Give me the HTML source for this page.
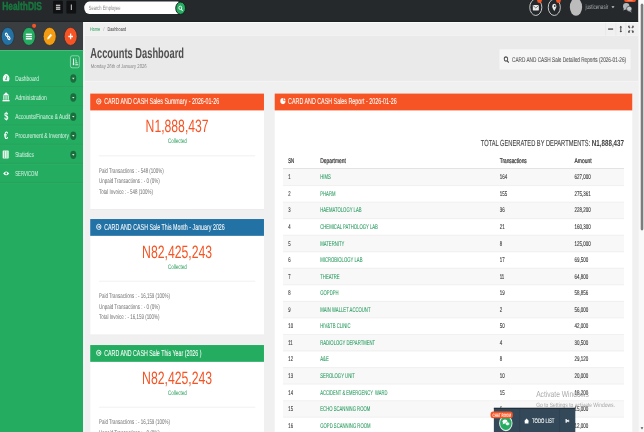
<!DOCTYPE html>
<html lang="en">
<head>
<meta charset="utf-8">
<title>HealthDIS - Accounts Dashboard</title>
<style>
html,body{margin:0;padding:0;width:644px;height:432px;overflow:hidden;background:#f2f2f2;font-family:"Liberation Sans",sans-serif;}
svg{will-change:transform;display:block;position:absolute;left:0;top:0;font-family:"Liberation Sans",sans-serif;}
svg text{font-family:"Liberation Sans",sans-serif;text-rendering:geometricPrecision;}
</style>
</head>
<body>
<svg width="644" height="432" viewBox="0 0 1920 1080" preserveAspectRatio="none">
<rect x="0.0" y="0.0" width="1920.0" height="1080.0" fill="#f0f0f0"/>
<rect x="248.0" y="55.0" width="1655.0" height="34.5" fill="#f0f0f0"/>
<rect x="248.0" y="54.5" width="1655.0" height="2.8" fill="#fbfbfb"/>
<rect x="248.0" y="89.5" width="1655.0" height="113.5" fill="#eaeaea"/>
<rect x="248.0" y="88.3" width="1655.0" height="1.6" fill="#f4f4f4"/>
<rect x="248.0" y="203.0" width="1655.0" height="878.0" fill="#f0f0f0"/>
<rect x="248.0" y="202.2" width="1655.0" height="1.8" fill="#f7f7f7"/>
<rect x="269.0" y="235.0" width="518.0" height="289.0" fill="#e3e3e3"/>
<rect x="269.0" y="234.0" width="518.0" height="289.0" fill="#ffffff"/>
<rect x="269.0" y="234.0" width="518.0" height="42.0" fill="#f65424"/>
<circle cx="294.5" cy="253.6" r="6.500" fill="none" stroke="#fff" stroke-width="2.400"/>
<path d="M291.3 253.6h5.200M294.7 250.79999999999998l2.800 2.800l-2.800 2.800" stroke="#fff" stroke-width="2.200" fill="none"/>
<text x="310.7" y="261.2" font-size="21.5" fill="#ffffff" textLength="343.0" lengthAdjust="spacingAndGlyphs" stroke="#ffffff" stroke-width="0.15">CARD AND CASH Sales Summary - 2026-01-26</text>
<text x="528.0" y="330.6" font-size="44.5" fill="#f65424" text-anchor="middle" textLength="188.0" lengthAdjust="spacingAndGlyphs">N1,888,437</text>
<text x="528.5" y="357.8" font-size="16.5" fill="#239d57" text-anchor="middle" textLength="56.0" lengthAdjust="spacingAndGlyphs">Collected</text>
<line x1="295.0" y1="389.5" x2="761.0" y2="389.5" stroke="#e6e6e6" stroke-width="1.5"/>
<text x="295.0" y="431.3" font-size="17" fill="#707070" textLength="193.0" lengthAdjust="spacingAndGlyphs">Paid Transactions : - 548 (100%)</text>
<text x="295.0" y="458.0" font-size="17" fill="#707070" textLength="181.0" lengthAdjust="spacingAndGlyphs">Unpaid Transactions : - 0 (0%)</text>
<text x="295.0" y="484.7" font-size="17" fill="#707070" textLength="161.0" lengthAdjust="spacingAndGlyphs">Total Invoice : - 548 (100%)</text>
<rect x="269.0" y="548.6" width="518.0" height="289.0" fill="#e3e3e3"/>
<rect x="269.0" y="547.6" width="518.0" height="289.0" fill="#ffffff"/>
<rect x="269.0" y="547.6" width="518.0" height="42.0" fill="#2372a5"/>
<circle cx="294.5" cy="567.2" r="6.500" fill="none" stroke="#fff" stroke-width="2.400"/>
<path d="M291.3 567.2h5.200M294.7 564.4000000000001l2.800 2.800l-2.800 2.800" stroke="#fff" stroke-width="2.200" fill="none"/>
<text x="310.7" y="574.8" font-size="21.5" fill="#ffffff" textLength="359.5" lengthAdjust="spacingAndGlyphs" stroke="#ffffff" stroke-width="0.15">CARD AND CASH Sale This Month - January 2026</text>
<text x="528.0" y="644.2" font-size="44.5" fill="#f65424" text-anchor="middle" textLength="209.0" lengthAdjust="spacingAndGlyphs">N82,425,243</text>
<text x="528.5" y="671.4" font-size="16.5" fill="#239d57" text-anchor="middle" textLength="56.0" lengthAdjust="spacingAndGlyphs">Collected</text>
<line x1="295.0" y1="703.1" x2="761.0" y2="703.1" stroke="#e6e6e6" stroke-width="1.5"/>
<text x="295.0" y="744.9" font-size="17" fill="#707070" textLength="211.6" lengthAdjust="spacingAndGlyphs">Paid Transactions : - 16,159 (100%)</text>
<text x="295.0" y="771.6" font-size="17" fill="#707070" textLength="181.0" lengthAdjust="spacingAndGlyphs">Unpaid Transactions : - 0 (0%)</text>
<text x="295.0" y="798.3" font-size="17" fill="#707070" textLength="180.7" lengthAdjust="spacingAndGlyphs">Total Invoice : - 16,159 (100%)</text>
<rect x="269.0" y="863.6" width="518.0" height="289.0" fill="#e3e3e3"/>
<rect x="269.0" y="862.6" width="518.0" height="289.0" fill="#ffffff"/>
<rect x="269.0" y="862.6" width="518.0" height="42.0" fill="#24ad61"/>
<circle cx="294.5" cy="882.2" r="6.500" fill="none" stroke="#fff" stroke-width="2.400"/>
<path d="M291.3 882.2h5.200M294.7 879.4000000000001l2.800 2.800l-2.800 2.800" stroke="#fff" stroke-width="2.200" fill="none"/>
<text x="310.7" y="889.8" font-size="21.5" fill="#ffffff" textLength="290.0" lengthAdjust="spacingAndGlyphs" stroke="#ffffff" stroke-width="0.15">CARD AND CASH Sale This Year (2026 )</text>
<text x="528.0" y="959.2" font-size="44.5" fill="#f65424" text-anchor="middle" textLength="209.0" lengthAdjust="spacingAndGlyphs">N82,425,243</text>
<text x="528.5" y="986.4" font-size="16.5" fill="#239d57" text-anchor="middle" textLength="56.0" lengthAdjust="spacingAndGlyphs">Collected</text>
<line x1="295.0" y1="1018.1" x2="761.0" y2="1018.1" stroke="#e6e6e6" stroke-width="1.5"/>
<text x="295.0" y="1059.9" font-size="17" fill="#707070" textLength="211.6" lengthAdjust="spacingAndGlyphs">Paid Transactions : - 16,159 (100%)</text>
<text x="295.0" y="1086.6" font-size="17" fill="#707070" textLength="181.0" lengthAdjust="spacingAndGlyphs">Unpaid Transactions : - 0 (0%)</text>
<text x="295.0" y="1113.3" font-size="17" fill="#707070" textLength="180.7" lengthAdjust="spacingAndGlyphs">Total Invoice : - 16,159 (100%)</text>
<rect x="819.0" y="235.0" width="1066.0" height="900.0" fill="#ffffff"/>
<rect x="819.0" y="234.0" width="1066.0" height="42.0" fill="#f65424"/>
<ellipse cx="843.500" cy="252.800" rx="7.800" ry="7.600" fill="#fff"/><path d="M845 244.500v7h7.500" stroke="#f65424" stroke-width="1.800" fill="none"/>
<text x="859.0" y="261.2" font-size="21.5" fill="#ffffff" textLength="323.5" lengthAdjust="spacingAndGlyphs" stroke="#ffffff" stroke-width="0.15">CARD AND CASH Sales Report - 2026-01-26</text>
<text x="1433.5" y="365.8" font-size="22" fill="#444444" textLength="331.0" lengthAdjust="spacingAndGlyphs" xml:space="preserve" stroke="#444444" stroke-width="0.25">TOTAL GENERATED BY DEPARTMENTS: </text>
<text x="1860.4" y="365.8" font-size="22" fill="#3a3a3a" font-weight="700" text-anchor="end" textLength="96.0" lengthAdjust="spacingAndGlyphs">N1,888,437</text>
<text x="859.5" y="406.5" font-size="17" fill="#2e2e2e" textLength="17.6" lengthAdjust="spacingAndGlyphs" stroke="#2e2e2e" stroke-width="0.5">SN</text>
<text x="954.8" y="406.5" font-size="17" fill="#2e2e2e" textLength="76.4" lengthAdjust="spacingAndGlyphs" stroke="#2e2e2e" stroke-width="0.5">Department</text>
<text x="1489.8" y="406.5" font-size="17" fill="#2e2e2e" textLength="80.6" lengthAdjust="spacingAndGlyphs" stroke="#2e2e2e" stroke-width="0.5">Transactions</text>
<text x="1713.0" y="406.5" font-size="17" fill="#2e2e2e" textLength="50.7" lengthAdjust="spacingAndGlyphs" stroke="#2e2e2e" stroke-width="0.5">Amount</text>
<rect x="843.7" y="420.5" width="1016.7" height="2.0" fill="#dddddd"/>
<rect x="843.7" y="422.5" width="1016.7" height="41.4" fill="#f8f8f8"/>
<text x="859.5" y="448.5" font-size="17" fill="#3a3a3a" textLength="7.0" lengthAdjust="spacingAndGlyphs" stroke="#3a3a3a" stroke-width="0.3">1</text>
<text x="954.8" y="448.5" font-size="17" fill="#22995a" textLength="31.5" lengthAdjust="spacingAndGlyphs" xml:space="preserve" stroke="#22995a" stroke-width="0.15">HIMS</text>
<text x="1489.8" y="448.5" font-size="17" fill="#3a3a3a" textLength="22.1" lengthAdjust="spacingAndGlyphs" stroke="#3a3a3a" stroke-width="0.3">164</text>
<text x="1713.0" y="448.5" font-size="17" fill="#3a3a3a" textLength="48.3" lengthAdjust="spacingAndGlyphs" stroke="#3a3a3a" stroke-width="0.3">627,000</text>
<line x1="843.7" y1="463.9" x2="1860.4" y2="463.9" stroke="#e2e2e2" stroke-width="1.2"/>
<text x="859.5" y="489.9" font-size="17" fill="#3a3a3a" textLength="7.0" lengthAdjust="spacingAndGlyphs" stroke="#3a3a3a" stroke-width="0.3">2</text>
<text x="954.8" y="489.9" font-size="17" fill="#22995a" textLength="45.5" lengthAdjust="spacingAndGlyphs" xml:space="preserve" stroke="#22995a" stroke-width="0.15">PHARM</text>
<text x="1489.8" y="489.9" font-size="17" fill="#3a3a3a" textLength="22.1" lengthAdjust="spacingAndGlyphs" stroke="#3a3a3a" stroke-width="0.3">155</text>
<text x="1713.0" y="489.9" font-size="17" fill="#3a3a3a" textLength="48.3" lengthAdjust="spacingAndGlyphs" stroke="#3a3a3a" stroke-width="0.3">275,361</text>
<rect x="843.7" y="505.2" width="1016.7" height="41.4" fill="#f8f8f8"/>
<line x1="843.7" y1="505.2" x2="1860.4" y2="505.2" stroke="#e2e2e2" stroke-width="1.2"/>
<text x="859.5" y="531.2" font-size="17" fill="#3a3a3a" textLength="7.0" lengthAdjust="spacingAndGlyphs" stroke="#3a3a3a" stroke-width="0.3">3</text>
<text x="954.8" y="531.2" font-size="17" fill="#22995a" textLength="123.2" lengthAdjust="spacingAndGlyphs" xml:space="preserve" stroke="#22995a" stroke-width="0.15">HAEMATOLOGY LAB</text>
<text x="1489.8" y="531.2" font-size="17" fill="#3a3a3a" textLength="14.7" lengthAdjust="spacingAndGlyphs" stroke="#3a3a3a" stroke-width="0.3">36</text>
<text x="1713.0" y="531.2" font-size="17" fill="#3a3a3a" textLength="48.3" lengthAdjust="spacingAndGlyphs" stroke="#3a3a3a" stroke-width="0.3">228,200</text>
<line x1="843.7" y1="546.6" x2="1860.4" y2="546.6" stroke="#e2e2e2" stroke-width="1.2"/>
<text x="859.5" y="572.6" font-size="17" fill="#3a3a3a" textLength="7.0" lengthAdjust="spacingAndGlyphs" stroke="#3a3a3a" stroke-width="0.3">4</text>
<text x="954.8" y="572.6" font-size="17" fill="#22995a" textLength="171.8" lengthAdjust="spacingAndGlyphs" xml:space="preserve" stroke="#22995a" stroke-width="0.15">CHEMICAL PATHOLOGY LAB</text>
<text x="1489.8" y="572.6" font-size="17" fill="#3a3a3a" textLength="14.7" lengthAdjust="spacingAndGlyphs" stroke="#3a3a3a" stroke-width="0.3">21</text>
<text x="1713.0" y="572.6" font-size="17" fill="#3a3a3a" textLength="48.3" lengthAdjust="spacingAndGlyphs" stroke="#3a3a3a" stroke-width="0.3">160,300</text>
<rect x="843.7" y="588.0" width="1016.7" height="41.4" fill="#f8f8f8"/>
<line x1="843.7" y1="588.0" x2="1860.4" y2="588.0" stroke="#e2e2e2" stroke-width="1.2"/>
<text x="859.5" y="614.0" font-size="17" fill="#3a3a3a" textLength="7.0" lengthAdjust="spacingAndGlyphs" stroke="#3a3a3a" stroke-width="0.3">5</text>
<text x="954.8" y="614.0" font-size="17" fill="#22995a" textLength="71.9" lengthAdjust="spacingAndGlyphs" xml:space="preserve" stroke="#22995a" stroke-width="0.15">MATERNITY</text>
<text x="1489.8" y="614.0" font-size="17" fill="#3a3a3a" textLength="7.4" lengthAdjust="spacingAndGlyphs" stroke="#3a3a3a" stroke-width="0.3">8</text>
<text x="1713.0" y="614.0" font-size="17" fill="#3a3a3a" textLength="48.3" lengthAdjust="spacingAndGlyphs" stroke="#3a3a3a" stroke-width="0.3">125,000</text>
<line x1="843.7" y1="629.4" x2="1860.4" y2="629.4" stroke="#e2e2e2" stroke-width="1.2"/>
<text x="859.5" y="655.3" font-size="17" fill="#3a3a3a" textLength="7.0" lengthAdjust="spacingAndGlyphs" stroke="#3a3a3a" stroke-width="0.3">6</text>
<text x="954.8" y="655.3" font-size="17" fill="#22995a" textLength="125.8" lengthAdjust="spacingAndGlyphs" xml:space="preserve" stroke="#22995a" stroke-width="0.15">MICROBIOLOGY LAB</text>
<text x="1489.8" y="655.3" font-size="17" fill="#3a3a3a" textLength="14.7" lengthAdjust="spacingAndGlyphs" stroke="#3a3a3a" stroke-width="0.3">17</text>
<text x="1713.0" y="655.3" font-size="17" fill="#3a3a3a" textLength="40.9" lengthAdjust="spacingAndGlyphs" stroke="#3a3a3a" stroke-width="0.3">69,500</text>
<rect x="843.7" y="670.7" width="1016.7" height="41.4" fill="#f8f8f8"/>
<line x1="843.7" y1="670.7" x2="1860.4" y2="670.7" stroke="#e2e2e2" stroke-width="1.2"/>
<text x="859.5" y="696.7" font-size="17" fill="#3a3a3a" textLength="7.0" lengthAdjust="spacingAndGlyphs" stroke="#3a3a3a" stroke-width="0.3">7</text>
<text x="954.8" y="696.7" font-size="17" fill="#22995a" textLength="57.9" lengthAdjust="spacingAndGlyphs" xml:space="preserve" stroke="#22995a" stroke-width="0.15">THEATRE</text>
<text x="1489.8" y="696.7" font-size="17" fill="#3a3a3a" textLength="13.7" lengthAdjust="spacingAndGlyphs" stroke="#3a3a3a" stroke-width="0.3">11</text>
<text x="1713.0" y="696.7" font-size="17" fill="#3a3a3a" textLength="40.9" lengthAdjust="spacingAndGlyphs" stroke="#3a3a3a" stroke-width="0.3">64,800</text>
<line x1="843.7" y1="712.1" x2="1860.4" y2="712.1" stroke="#e2e2e2" stroke-width="1.2"/>
<text x="859.5" y="738.1" font-size="17" fill="#3a3a3a" textLength="7.0" lengthAdjust="spacingAndGlyphs" stroke="#3a3a3a" stroke-width="0.3">8</text>
<text x="954.8" y="738.1" font-size="17" fill="#22995a" textLength="54.6" lengthAdjust="spacingAndGlyphs" xml:space="preserve" stroke="#22995a" stroke-width="0.15">GOPDPH</text>
<text x="1489.8" y="738.1" font-size="17" fill="#3a3a3a" textLength="14.7" lengthAdjust="spacingAndGlyphs" stroke="#3a3a3a" stroke-width="0.3">19</text>
<text x="1713.0" y="738.1" font-size="17" fill="#3a3a3a" textLength="40.9" lengthAdjust="spacingAndGlyphs" stroke="#3a3a3a" stroke-width="0.3">58,856</text>
<rect x="843.7" y="753.5" width="1016.7" height="41.4" fill="#f8f8f8"/>
<line x1="843.7" y1="753.5" x2="1860.4" y2="753.5" stroke="#e2e2e2" stroke-width="1.2"/>
<text x="859.5" y="779.4" font-size="17" fill="#3a3a3a" textLength="7.0" lengthAdjust="spacingAndGlyphs" stroke="#3a3a3a" stroke-width="0.3">9</text>
<text x="954.8" y="779.4" font-size="17" fill="#22995a" textLength="149.8" lengthAdjust="spacingAndGlyphs" xml:space="preserve" stroke="#22995a" stroke-width="0.15">MAIN WALLET ACCOUNT</text>
<text x="1489.8" y="779.4" font-size="17" fill="#3a3a3a" textLength="7.4" lengthAdjust="spacingAndGlyphs" stroke="#3a3a3a" stroke-width="0.3">2</text>
<text x="1713.0" y="779.4" font-size="17" fill="#3a3a3a" textLength="40.9" lengthAdjust="spacingAndGlyphs" stroke="#3a3a3a" stroke-width="0.3">56,000</text>
<line x1="843.7" y1="794.8" x2="1860.4" y2="794.8" stroke="#e2e2e2" stroke-width="1.2"/>
<text x="859.5" y="820.8" font-size="17" fill="#3a3a3a" textLength="14.0" lengthAdjust="spacingAndGlyphs" stroke="#3a3a3a" stroke-width="0.3">10</text>
<text x="954.8" y="820.8" font-size="17" fill="#22995a" textLength="90.3" lengthAdjust="spacingAndGlyphs" xml:space="preserve" stroke="#22995a" stroke-width="0.15">HIV&amp;TB CLINIC</text>
<text x="1489.8" y="820.8" font-size="17" fill="#3a3a3a" textLength="14.7" lengthAdjust="spacingAndGlyphs" stroke="#3a3a3a" stroke-width="0.3">50</text>
<text x="1713.0" y="820.8" font-size="17" fill="#3a3a3a" textLength="40.9" lengthAdjust="spacingAndGlyphs" stroke="#3a3a3a" stroke-width="0.3">42,000</text>
<rect x="843.7" y="836.2" width="1016.7" height="41.4" fill="#f8f8f8"/>
<line x1="843.7" y1="836.2" x2="1860.4" y2="836.2" stroke="#e2e2e2" stroke-width="1.2"/>
<text x="859.5" y="862.2" font-size="17" fill="#3a3a3a" textLength="13.1" lengthAdjust="spacingAndGlyphs" stroke="#3a3a3a" stroke-width="0.3">11</text>
<text x="954.8" y="862.2" font-size="17" fill="#22995a" textLength="163.8" lengthAdjust="spacingAndGlyphs" xml:space="preserve" stroke="#22995a" stroke-width="0.15">RADIOLOGY DEPARTMENT</text>
<text x="1489.8" y="862.2" font-size="17" fill="#3a3a3a" textLength="7.4" lengthAdjust="spacingAndGlyphs" stroke="#3a3a3a" stroke-width="0.3">4</text>
<text x="1713.0" y="862.2" font-size="17" fill="#3a3a3a" textLength="40.9" lengthAdjust="spacingAndGlyphs" stroke="#3a3a3a" stroke-width="0.3">30,500</text>
<line x1="843.7" y1="877.6" x2="1860.4" y2="877.6" stroke="#e2e2e2" stroke-width="1.2"/>
<text x="859.5" y="903.6" font-size="17" fill="#3a3a3a" textLength="14.0" lengthAdjust="spacingAndGlyphs" stroke="#3a3a3a" stroke-width="0.3">12</text>
<text x="954.8" y="903.6" font-size="17" fill="#22995a" textLength="25.2" lengthAdjust="spacingAndGlyphs" xml:space="preserve" stroke="#22995a" stroke-width="0.15">A&amp;E</text>
<text x="1489.8" y="903.6" font-size="17" fill="#3a3a3a" textLength="7.4" lengthAdjust="spacingAndGlyphs" stroke="#3a3a3a" stroke-width="0.3">8</text>
<text x="1713.0" y="903.6" font-size="17" fill="#3a3a3a" textLength="40.9" lengthAdjust="spacingAndGlyphs" stroke="#3a3a3a" stroke-width="0.3">29,120</text>
<rect x="843.7" y="918.9" width="1016.7" height="41.4" fill="#f8f8f8"/>
<line x1="843.7" y1="918.9" x2="1860.4" y2="918.9" stroke="#e2e2e2" stroke-width="1.2"/>
<text x="859.5" y="944.9" font-size="17" fill="#3a3a3a" textLength="14.0" lengthAdjust="spacingAndGlyphs" stroke="#3a3a3a" stroke-width="0.3">13</text>
<text x="954.8" y="944.9" font-size="17" fill="#22995a" textLength="103.4" lengthAdjust="spacingAndGlyphs" xml:space="preserve" stroke="#22995a" stroke-width="0.15">SEROLOGY UNIT</text>
<text x="1489.8" y="944.9" font-size="17" fill="#3a3a3a" textLength="14.7" lengthAdjust="spacingAndGlyphs" stroke="#3a3a3a" stroke-width="0.3">10</text>
<text x="1713.0" y="944.9" font-size="17" fill="#3a3a3a" textLength="40.9" lengthAdjust="spacingAndGlyphs" stroke="#3a3a3a" stroke-width="0.3">20,000</text>
<line x1="843.7" y1="960.3" x2="1860.4" y2="960.3" stroke="#e2e2e2" stroke-width="1.2"/>
<text x="859.5" y="986.3" font-size="17" fill="#3a3a3a" textLength="14.0" lengthAdjust="spacingAndGlyphs" stroke="#3a3a3a" stroke-width="0.3">14</text>
<text x="954.8" y="986.3" font-size="17" fill="#22995a" textLength="200.6" lengthAdjust="spacingAndGlyphs" xml:space="preserve" stroke="#22995a" stroke-width="0.15">ACCIDENT &amp; EMERGENCY  WARD</text>
<text x="1489.8" y="986.3" font-size="17" fill="#3a3a3a" textLength="14.7" lengthAdjust="spacingAndGlyphs" stroke="#3a3a3a" stroke-width="0.3">15</text>
<text x="1713.0" y="986.3" font-size="17" fill="#3a3a3a" textLength="40.9" lengthAdjust="spacingAndGlyphs" stroke="#3a3a3a" stroke-width="0.3">18,200</text>
<rect x="843.7" y="1001.7" width="1016.7" height="41.4" fill="#f8f8f8"/>
<line x1="843.7" y1="1001.7" x2="1860.4" y2="1001.7" stroke="#e2e2e2" stroke-width="1.2"/>
<text x="859.5" y="1027.7" font-size="17" fill="#3a3a3a" textLength="14.0" lengthAdjust="spacingAndGlyphs" stroke="#3a3a3a" stroke-width="0.3">15</text>
<text x="954.8" y="1027.7" font-size="17" fill="#22995a" textLength="149.1" lengthAdjust="spacingAndGlyphs" xml:space="preserve" stroke="#22995a" stroke-width="0.15">ECHO SCANNING ROOM</text>
<text x="1489.8" y="1027.7" font-size="17" fill="#3a3a3a" textLength="7.4" lengthAdjust="spacingAndGlyphs" stroke="#3a3a3a" stroke-width="0.3">6</text>
<text x="1713.0" y="1027.7" font-size="17" fill="#3a3a3a" textLength="40.9" lengthAdjust="spacingAndGlyphs" stroke="#3a3a3a" stroke-width="0.3">15,000</text>
<line x1="843.7" y1="1043.0" x2="1860.4" y2="1043.0" stroke="#e2e2e2" stroke-width="1.2"/>
<text x="859.5" y="1069.0" font-size="17" fill="#3a3a3a" textLength="14.0" lengthAdjust="spacingAndGlyphs" stroke="#3a3a3a" stroke-width="0.3">16</text>
<text x="954.8" y="1069.0" font-size="17" fill="#22995a" textLength="149.8" lengthAdjust="spacingAndGlyphs" xml:space="preserve" stroke="#22995a" stroke-width="0.15">GOPD SCANNING ROOM</text>
<text x="1489.8" y="1069.0" font-size="17" fill="#3a3a3a" textLength="7.4" lengthAdjust="spacingAndGlyphs" stroke="#3a3a3a" stroke-width="0.3">3</text>
<text x="1713.0" y="1069.0" font-size="17" fill="#3a3a3a" textLength="40.9" lengthAdjust="spacingAndGlyphs" stroke="#3a3a3a" stroke-width="0.3">12,000</text>
<text x="269.0" y="145.2" font-size="36" fill="#4f4f4f" font-weight="700" textLength="279.5" lengthAdjust="spacingAndGlyphs">Accounts Dashboard</text>
<text x="270.7" y="168.8" font-size="14" fill="#858585" textLength="166.7" lengthAdjust="spacingAndGlyphs">Monday 26th of January 2026</text>
<rect x="1489.0" y="123.0" width="391.0" height="51.0" fill="#f6f6f6"/>
<circle cx="1508.500" cy="147.500" r="5.200" fill="none" stroke="#4a4a4a" stroke-width="2.800"/><path d="M1512.200 151.800l4.500 4.800" stroke="#4a4a4a" stroke-width="3.200"/>
<text x="1526.7" y="154.8" font-size="17" fill="#555" textLength="340.0" lengthAdjust="spacingAndGlyphs" stroke="#555" stroke-width="0.2">CARD AND CASH Sale Detailed Reports (2026-01-26)</text>
<text x="268.0" y="77.6" font-size="13.5" fill="#239d57" textLength="30.5" lengthAdjust="spacingAndGlyphs">Home</text>
<text x="307.5" y="77.6" font-size="13.5" fill="#aaa">/</text>
<text x="320.2" y="77.6" font-size="13.5" fill="#3d3d3d" textLength="56.0" lengthAdjust="spacingAndGlyphs">Dashboard</text>
<line x1="1805.5" y1="57.0" x2="1805.5" y2="89.0" stroke="#e2e2e2" stroke-width="1.5"/>
<line x1="1836.0" y1="57.0" x2="1836.0" y2="89.0" stroke="#e2e2e2" stroke-width="1.5"/>
<line x1="1865.5" y1="57.0" x2="1865.5" y2="89.0" stroke="#e2e2e2" stroke-width="1.5"/>
<rect x="1813.0" y="71.0" width="15.0" height="3.4" fill="#4a4a4a"/>
<path d="M1850.800 66v14" stroke="#4a4a4a" stroke-width="3"/><path d="M1847 68.500l3.800-4l3.800 4zM1847 77.500l3.800 4l3.800-4z" fill="#4a4a4a"/>
<g stroke="#4a4a4a" stroke-width="2.800" fill="none"><path d="M1874.500 66l3.800 4.200M1887.500 66l-3.800 4.200M1874.500 80l3.800-4.200M1887.500 80l-3.800-4.200"/></g><g fill="#4a4a4a"><path d="M1872.800 64.300h5.500l-5.500 6zM1889.200 64.300h-5.500l5.500 6zM1872.800 81.700h5.500l-5.500-6zM1889.200 81.700h-5.500l5.500-6z"/></g>
<rect x="0.0" y="55.0" width="248.0" height="70.0" fill="#3a3e41"/>
<rect x="0.0" y="125.0" width="248.0" height="955.0" fill="#24ad61"/>
<rect x="248.0" y="55.0" width="5.0" height="1025.0" fill="#f7f4f5"/>
<rect x="0.0" y="125.0" width="248.0" height="2.0" fill="#4fbe82"/>
<ellipse cx="23.1" cy="91" rx="19.400" ry="22.600" fill="#2372a5" stroke="#2a2e31" stroke-width="2"/>
<ellipse cx="86.1" cy="91" rx="19.400" ry="22.600" fill="#24ad61" stroke="#2a2e31" stroke-width="2"/>
<ellipse cx="148.1" cy="91" rx="19.400" ry="22.600" fill="#f39c12" stroke="#2a2e31" stroke-width="2"/>
<ellipse cx="210.6" cy="91" rx="19.400" ry="22.600" fill="#f65424" stroke="#2a2e31" stroke-width="2"/>
<g stroke="#fff" stroke-width="3" fill="none"><ellipse cx="19.800" cy="87" rx="4.600" ry="2.800" transform="rotate(48 19.800 87)"/><ellipse cx="26.200" cy="95" rx="4.600" ry="2.800" transform="rotate(48 26.200 95)"/></g>
<g fill="#fff"><rect x="77" y="84" width="18" height="3.500"/><rect x="77" y="89.600" width="18" height="3.500"/><rect x="77" y="95.200" width="18" height="3.500"/></g>
<path d="M141.500 98l1.200-4.200l8.500-8.500l3.200 3.200l-8.500 8.500z" fill="#fff" stroke="#fff" stroke-width="1.200" stroke-linejoin="round"/>
<path d="M210.600 83.800v14.400M203.600 91h14" stroke="#fff" stroke-width="3.700"/>
<ellipse cx="101.6" cy="64.6" rx="6" ry="5.2" fill="#f65424"/>
<rect x="210" y="139.500" width="26.500" height="30" rx="5" fill="none" stroke="#fff" stroke-opacity="0.5" stroke-width="2.400"/>
<path d="M219.300 146v15" stroke="#fff" stroke-width="2.800" fill="none"/><path d="M215.800 159.500h7l-3.500 4z" fill="#fff"/><path d="M224.500 147.500h2.800M224.500 152.300h4.800M224.500 157.100h6.800M224.500 161.900h8.800" stroke="#fff" stroke-width="2.400" fill="none"/>
<line x1="0.0" y1="217.5" x2="248.0" y2="217.5" stroke="rgba(0,0,0,0.13)" stroke-width="1.5"/>
<line x1="0.0" y1="218.9" x2="248.0" y2="218.9" stroke="rgba(255,255,255,0.10)" stroke-width="1.2"/>
<text x="45.3" y="202.0" font-size="18" fill="#ffffff" textLength="70.7" lengthAdjust="spacingAndGlyphs" fill-opacity="0.86">Dashboard</text>
<ellipse cx="218.500" cy="196.2" rx="9" ry="10.400" fill="#1b6d3d"/>
<path d="M214.800 194.5l3.700 4l3.700-4z" fill="#d5efe0"/>
<line x1="0.0" y1="265.2" x2="248.0" y2="265.2" stroke="rgba(0,0,0,0.13)" stroke-width="1.5"/>
<line x1="0.0" y1="266.6" x2="248.0" y2="266.6" stroke="rgba(255,255,255,0.10)" stroke-width="1.2"/>
<text x="45.3" y="249.7" font-size="18" fill="#ffffff" textLength="94.0" lengthAdjust="spacingAndGlyphs" fill-opacity="0.86">Administration</text>
<ellipse cx="218.500" cy="243.8" rx="9" ry="10.400" fill="#1b6d3d"/>
<path d="M214.800 242.2l3.700 4l3.700-4z" fill="#d5efe0"/>
<line x1="0.0" y1="312.9" x2="248.0" y2="312.9" stroke="rgba(0,0,0,0.13)" stroke-width="1.5"/>
<line x1="0.0" y1="314.3" x2="248.0" y2="314.3" stroke="rgba(255,255,255,0.10)" stroke-width="1.2"/>
<text x="45.3" y="297.4" font-size="18" fill="#ffffff" textLength="163.4" lengthAdjust="spacingAndGlyphs" fill-opacity="0.86">Accounts/Finance &amp; Audit</text>
<ellipse cx="218.500" cy="291.6" rx="9" ry="10.400" fill="#1b6d3d"/>
<path d="M214.800 289.9l3.700 4l3.700-4z" fill="#d5efe0"/>
<line x1="0.0" y1="360.6" x2="248.0" y2="360.6" stroke="rgba(0,0,0,0.13)" stroke-width="1.5"/>
<line x1="0.0" y1="362.0" x2="248.0" y2="362.0" stroke="rgba(255,255,255,0.10)" stroke-width="1.2"/>
<text x="45.3" y="345.1" font-size="18" fill="#ffffff" textLength="160.0" lengthAdjust="spacingAndGlyphs" fill-opacity="0.86">Procurement &amp; Inventory</text>
<ellipse cx="218.500" cy="339.3" rx="9" ry="10.400" fill="#1b6d3d"/>
<path d="M214.800 337.6l3.700 4l3.700-4z" fill="#d5efe0"/>
<line x1="0.0" y1="408.3" x2="248.0" y2="408.3" stroke="rgba(0,0,0,0.13)" stroke-width="1.5"/>
<line x1="0.0" y1="409.7" x2="248.0" y2="409.7" stroke="rgba(255,255,255,0.10)" stroke-width="1.2"/>
<text x="45.3" y="392.8" font-size="18" fill="#ffffff" textLength="55.2" lengthAdjust="spacingAndGlyphs" fill-opacity="0.86">Statistics</text>
<ellipse cx="218.500" cy="387.0" rx="9" ry="10.400" fill="#1b6d3d"/>
<path d="M214.800 385.3l3.700 4l3.700-4z" fill="#d5efe0"/>
<line x1="0.0" y1="456.0" x2="248.0" y2="456.0" stroke="rgba(0,0,0,0.13)" stroke-width="1.5"/>
<line x1="0.0" y1="457.4" x2="248.0" y2="457.4" stroke="rgba(255,255,255,0.10)" stroke-width="1.2"/>
<text x="45.3" y="440.5" font-size="18" fill="#ffffff" textLength="68.0" lengthAdjust="spacingAndGlyphs" fill-opacity="0.86">SERVICOM</text>
<path d="M10 203.15A9.600 11.800 0 1 1 26.500 203.15z" fill="#fff"/><path d="M18 198.15l2.500-8" stroke="#24ad61" stroke-width="2.200"/><circle cx="18" cy="198.15" r="2.200" fill="#24ad61"/><path d="M11 194.15h2M23 194.15h2M18 187.15v2" stroke="#24ad61" stroke-width="1.500"/>
<path d="M8 238.85l10-8l10 8z" fill="#fff"/><rect x="7.500" y="249.85" width="21" height="3.500" fill="#fff"/><g fill="#fff"><rect x="10" y="239.85" width="3.200" height="9.500"/><rect x="16.400" y="239.85" width="3.200" height="9.500"/><rect x="22.800" y="239.85" width="3.200" height="9.500"/></g>
<text x="18.5" y="299.6" font-size="28" fill="#fff" font-weight="700" text-anchor="middle" textLength="12.0" lengthAdjust="spacingAndGlyphs">$</text>
<text x="18.5" y="347.3" font-size="27" fill="#fff" font-weight="700" text-anchor="middle" textLength="12.5" lengthAdjust="spacingAndGlyphs">€</text>
<rect x="8" y="376.45000000000005" width="18" height="20" rx="2" fill="#e8f8ee"/><path d="M13.500 377.95000000000005v17M20.500 377.95000000000005v17" stroke="#24ad61" stroke-width="1.300"/>
<path d="M9.500 433.65000000000003q9-9.500 18 0q-9 9.500-18 0z" fill="#fff"/><circle cx="18.500" cy="433.65000000000003" r="2.800" fill="#24ad61"/>
<rect x="0.0" y="0.0" width="1903.0" height="54.5" fill="#25292b"/>
<rect x="0.0" y="52.2" width="1903.0" height="2.3" fill="#15181a"/>
<defs><linearGradient id="lg" x1="0" y1="0" x2="0" y2="1"><stop offset="0" stop-color="#1f8a49"/><stop offset="1" stop-color="#125c30"/></linearGradient></defs>
<text x="6.5" y="25.8" font-size="29" fill="#18773f" font-weight="700" textLength="118.5" lengthAdjust="spacingAndGlyphs" stroke="#18773f" stroke-width="1.1">HealthDIS</text>
<rect x="158.3" y="2.0" width="29.2" height="32.0" fill="#0f1112" rx="3"/>
<rect x="198.0" y="2.0" width="29.0" height="32.0" fill="#0f1112" rx="3"/>
<path d="M166.700 13.200h13M166.700 18h13M166.700 22.800h13" stroke="#eee" stroke-width="2.800"/>
<path d="M212.500 11v14" stroke="#eee" stroke-width="2.600"/>
<rect x="251.0" y="4.0" width="293.0" height="31.0" fill="#ffffff" rx="15.5"/>
<text x="264.6" y="24.6" font-size="15.5" fill="#8a8a8a" textLength="95.0" lengthAdjust="spacingAndGlyphs">Search Employee</text>
<ellipse cx="538.500" cy="20.500" rx="14.500" ry="15.500" fill="#24ad61" stroke="#15181a" stroke-width="2.500"/>
<circle cx="537.500" cy="19.500" r="4.300" fill="none" stroke="#fff" stroke-width="2.400"/><path d="M540.500 23l4 4.300" stroke="#fff" stroke-width="2.800"/>
<ellipse cx="1597.4" cy="18.300" rx="18" ry="20.300" fill="none" stroke="#dcdcdc" stroke-width="2.400"/>
<ellipse cx="1652.5" cy="18.300" rx="18" ry="20.300" fill="none" stroke="#dcdcdc" stroke-width="2.400"/>
<rect x="1588.500" y="12.500" width="18" height="13.500" rx="1.500" fill="#e8e8e8"/><path d="M1589 13.500l8.500 6.500l8.500-6.500" stroke="#25292b" stroke-width="1.600" fill="none"/>
<path d="M1652.500 9.500a6.300 6.300 0 0 1 6.300 6.300c0 4.500-6.300 12.200-6.300 12.200s-6.300-7.700-6.300-12.200a6.300 6.300 0 0 1 6.300-6.300z" fill="#e8e8e8"/><circle cx="1654" cy="15" r="2.300" fill="#25292b"/>
<ellipse cx="1608.500" cy="1.200" rx="7" ry="6.300" fill="#f65424"/><ellipse cx="1665" cy="1.200" rx="7" ry="6.300" fill="#f65424"/>
<ellipse cx="1717.200" cy="17.500" rx="18.300" ry="22" fill="#bcbcbc"/>
<text x="1745.5" y="22.4" font-size="16" fill="#a9a9a9" textLength="67.7" lengthAdjust="spacingAndGlyphs">justicenasir</text>
<path d="M1823 15.500h9l-4.500 5z" fill="#c8c8c8"/>
<g fill="#b3b8bb"><ellipse cx="1867" cy="15.500" rx="9.500" ry="8.300"/><path d="M1860.500 20l-2 6.500l7.500-3.500z"/></g><g fill="#c4c9cc" stroke="#25292b" stroke-width="1.600"><path d="M1879.500 26l4 5.500l-8-3z" stroke="none"/><ellipse cx="1876" cy="22" rx="8" ry="6.500"/></g>
<rect x="1861.0" y="-6.0" width="35.0" height="11.3" fill="#f65424" rx="5.5"/>
<rect x="1871.0" y="0.0" width="15.0" height="1.3" fill="#fbc4b0"/>
<text x="1598.5" y="992.8" font-size="21.5" fill="#9a9a9a" textLength="157.0" lengthAdjust="spacingAndGlyphs" opacity="0.85">Activate Windows</text>
<text x="1598.5" y="1017.0" font-size="15.5" fill="#9c9c9c" textLength="235.0" lengthAdjust="spacingAndGlyphs" opacity="0.9">Go to Settings to activate Windows.</text>
<rect x="1472.4" y="1019.6" width="242.8" height="61.0" fill="#33495a"/>
<rect x="1472.4" y="1019.6" width="242.8" height="2.2" fill="#1c2730"/>
<line x1="1549.6" y1="1022.0" x2="1549.6" y2="1080.0" stroke="#2a3c4a" stroke-width="1.5"/>
<line x1="1668.5" y1="1022.0" x2="1668.5" y2="1080.0" stroke="#2a3c4a" stroke-width="1.5"/>
<ellipse cx="1508" cy="1058" rx="18.500" ry="18.500" fill="#24ad61" stroke="#e6ece9" stroke-width="3"/>
<g fill="#fff"><ellipse cx="1505.500" cy="1054" rx="7.500" ry="5.500"/><path d="M1500 1057l-1.500 4.500l5-2.500z"/><ellipse cx="1513" cy="1059.500" rx="6" ry="4.500" stroke="#27ae60" stroke-width="1.200"/></g>
<rect x="1462.400" y="1029" width="66.600" height="16.500" rx="8" fill="#f65424"/>
<text x="1495.7" y="1041.8" font-size="12.5" fill="#fff" font-weight="700" text-anchor="middle" textLength="55.0" lengthAdjust="spacingAndGlyphs">CHAT ROOM</text>
<path d="M1562.500 1053l7.500-6.500l7.500 6.500h-2v6h-11v-6z" fill="#fff"/>
<text x="1586.3" y="1058.0" font-size="16.5" fill="#fff" textLength="66.7" lengthAdjust="spacingAndGlyphs" stroke="#fff" stroke-width="0.3">TODO LIST</text>
<path d="M1686 1047.500h4v2.800h4.500v4h-4.500v2.800h-4z" fill="#f0f0f0"/><path d="M1694 1048.300l4 4l-4 4z" fill="#f0f0f0"/>
<rect x="1904.0" y="0.0" width="16.0" height="1080.0" fill="#f9f9f9"/>
<rect x="1910.2" y="9.0" width="7.8" height="567.0" fill="#7c7c7c" rx="3.9"/>
<path d="M1910 1068h8l-4 6z" fill="#555"/>
</svg>
</body>
</html>
